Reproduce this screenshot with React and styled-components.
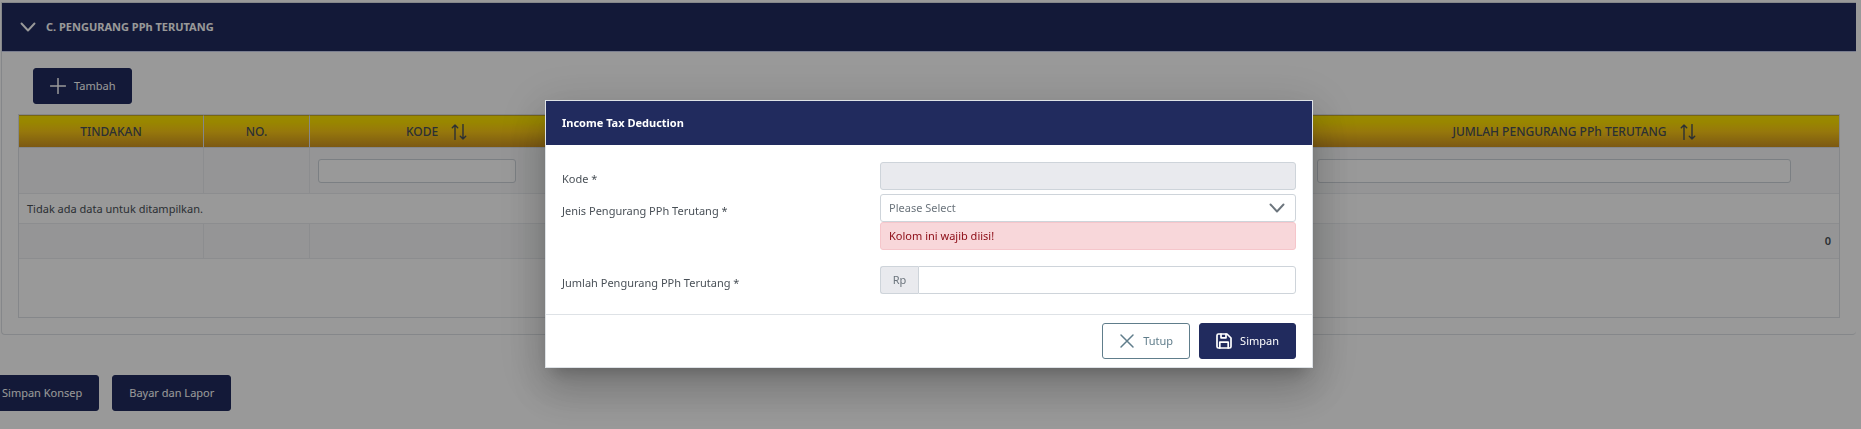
import React from "react";
import styled, { createGlobalStyle, css } from "styled-components";

const navy = "#212b5e";
const line = "#dee2e6";
const inputLine = "#ced4da";
const ink = "#495057";

const GlobalStyle = createGlobalStyle`
  *, *::before, *::after { box-sizing: border-box; }
  body {
    margin: 0;
    background: #fff;
    color: ${ink};
    font-family: "Noto Sans", "Open Sans", sans-serif;
    font-size: 11px;
    line-height: 18px;
  }
  button, input, select { font: inherit; color: inherit; margin: 0; }
`;

const Page = styled.main`
  min-height: 100vh;
  padding: 2px 5px 0 1px;
  overflow: hidden;
`;

const Card = styled.section`
  border: 1px solid ${line};
  border-right: 0;
  border-radius: 0 0 4px 4px;
`;

const CardHeader = styled.h2`
  margin: 0;
  border-bottom: 1px solid #ccd2ee;
  background: ${navy};
  font-size: 11px;
`;

const CollapseButton = styled.button`
  display: flex;
  align-items: center;
  gap: 10px;
  width: 100%;
  height: 48px;
  padding: 0 18px;
  border: 0;
  background: none;
  color: #fff;
  font-weight: 700;
  text-align: left;
`;

const CardBody = styled.div`
  padding: 16px;
`;

const Toolbar = styled.div`
  display: flex;
  padding: 0 15px 10px;
`;

const Button = styled.button`
  display: inline-flex;
  align-items: center;
  justify-content: center;
  gap: 8px;
  height: 36px;
  padding: 0 16px;
  border: 1px solid ${navy};
  border-radius: 3px;
  background: ${navy};
  color: #fff;
  ${(p) =>
    p.$outlined &&
    css`
      border-color: #607d8b;
      background: #fff;
      color: #607d8b;
    `}
`;

const TableWrap = styled.div`
  min-height: 204px;
  border: 1px solid ${line};
`;

const Table = styled.table`
  width: 100%;
  table-layout: fixed;
  border-collapse: separate;
  border-spacing: 0;
`;

const Col = styled.col`
  width: ${(p) => p.$width};
`;

const HeadCell = styled.th`
  height: 33px;
  padding: 0 8px;
  border-top: 1px solid #c8a820;
  border-right: 1px solid ${line};
  border-bottom: 1px solid ${line};
  background: linear-gradient(#ffe600 0%, #ffe000 20%, #fbc814 50%, #cf9420 100%);
  font-size: 12px;
  font-weight: 500;
  text-align: center;
  &:last-child { border-right: 0; }
`;

const HeadLabel = styled.span`
  display: inline-flex;
  align-items: center;
  gap: 13px;
`;

const Cell = styled.td`
  height: ${(p) => p.$height};
  padding: 0 8px;
  border-bottom: 1px solid #e9ecef;
  background: ${(p) => (p.$shaded ? "#f8f9fa" : "#fff")};
  border-right: ${(p) => (p.$divided ? "1px solid #e9ecef" : "0")};
  text-align: ${(p) => (p.$numeric ? "right" : "left")};
  font-weight: ${(p) => (p.$numeric ? 600 : 400)};
`;

const FilterBox = styled.div`
  display: flex;
  padding-right: 40px;
`;

const TextInput = styled.input`
  flex: 1;
  width: 100%;
  min-width: 0;
  height: ${(p) => p.$height || "28px"};
  padding: 0 8px;
  border: 1px solid ${inputLine};
  border-radius: ${(p) => (p.$joined ? "0 3px 3px 0" : "3px")};
  background: #fff;
  &:disabled { background: #e9eaee; }
`;

const PageActions = styled.div`
  display: flex;
  gap: 13px;
  margin: 40px 0 0 -16px;
`;

const Backdrop = styled.div`
  position: fixed;
  inset: 0;
  display: flex;
  justify-content: center;
  align-items: flex-start;
  padding: 100px 3px 0 0;
  background: rgba(0, 0, 0, 0.4);
`;

const Dialog = styled.section`
  width: 768px;
  max-width: 100%;
  border: 1px solid ${line};
  background: #fff;
  box-shadow: 0 11px 15px -7px rgba(0, 0, 0, 0.2), 0 24px 38px 3px rgba(0, 0, 0, 0.14),
    0 9px 46px 8px rgba(0, 0, 0, 0.12);
`;

const DialogTitle = styled.h1`
  margin: 0;
  padding: 13px 16px;
  background: ${navy};
  color: #fff;
  font-size: 11px;
  font-weight: 700;
`;

const DialogBody = styled.div`
  display: grid;
  gap: 4px;
  padding: 17px 16px 20px;
`;

const Field = styled.div`
  display: grid;
  grid-template-columns: 13fr 17fr;
  align-items: start;
  margin-top: ${(p) => (p.$spaced ? "12px" : "0")};
`;

const Label = styled.label`
  padding-top: 8px;
`;

const SelectBox = styled.div`
  position: relative;
  color: #6c757d;
`;

const Select = styled.select`
  display: block;
  width: 100%;
  height: 28px;
  padding: 0 32px 0 8px;
  border: 1px solid ${inputLine};
  border-radius: 3px;
  background: #fff;
  appearance: none;
`;

const SelectArrow = styled.span`
  position: absolute;
  top: 6px;
  right: 11px;
  display: flex;
  pointer-events: none;
`;

const ErrorMessage = styled.div`
  padding: 4px 8px;
  border: 1px solid #f5c6cb;
  border-radius: 3px;
  background: #f8d7da;
  color: #8b0a14;
`;

const InputGroup = styled.div`
  display: flex;
`;

const Prefix = styled.span`
  display: flex;
  align-items: center;
  justify-content: center;
  width: 38px;
  border: 1px solid ${inputLine};
  border-right: 0;
  border-radius: 3px 0 0 3px;
  background: #e9eaee;
  color: #6c757d;
`;

const DialogFooter = styled.footer`
  display: flex;
  justify-content: flex-end;
  gap: 9px;
  padding: 8px 16px;
  border-top: 1px solid ${line};
`;

const Icon = ({ width = 1, children }) => (
  <svg
    width="16"
    height="16"
    viewBox="0 0 16 16"
    fill="none"
    stroke="currentColor"
    strokeWidth={width}
    strokeLinecap="round"
    strokeLinejoin="round"
    aria-hidden="true"
  >
    {children}
  </svg>
);

const ChevronIcon = () => (
  <Icon width={1.9}>
    <path d="M1.500 4.500 8 11.500l6.500-7" />
  </Icon>
);

const PlusIcon = () => (
  <Icon width={1.5}>
    <path d="M8 .5v15M.5 8h15" />
  </Icon>
);

const CloseIcon = () => (
  <Icon width={1.5}>
    <path d="M2 2l12 12M14 2 2 14" />
  </Icon>
);

const SortIcon = () => (
  <Icon width={1.4}>
    <path d="M4 15.500V1M1.300 3.700 4 1l2.700 2.700M12 .5V15M9.300 12.300 12 15l2.700-2.700" />
  </Icon>
);

const SaveIcon = () => (
  <Icon width={1.7}>
    <path d="M2.400 1H11l4 4v8.600a1.400 1.400 0 0 1-1.400 1.400H2.400A1.400 1.400 0 0 1 1 13.600V2.400A1.400 1.400 0 0 1 2.400 1z" />
    <path d="M3.800 15V9.200h8.400V15M5 1v3.800h5V1" />
  </Icon>
);

export default function App() {
  return (
    <>
      <GlobalStyle />
      <Page>
        <Card>
          <CardHeader>
            <CollapseButton type="button" aria-expanded="true">
              <ChevronIcon />
              C. PENGURANG PPh TERUTANG
            </CollapseButton>
          </CardHeader>
          <CardBody>
            <Toolbar>
              <Button type="button">
                <PlusIcon />
                Tambah
              </Button>
            </Toolbar>
            <TableWrap>
              <Table>
                <colgroup>
                  <Col $width="185px" />
                  <Col $width="106px" />
                  <Col $width="254px" />
                  <Col />
                  <Col $width="530px" />
                </colgroup>
                <thead>
                  <tr>
                    <HeadCell>TINDAKAN</HeadCell>
                    <HeadCell>NO.</HeadCell>
                    <HeadCell>
                      <HeadLabel>
                        KODE <SortIcon />
                      </HeadLabel>
                    </HeadCell>
                    <HeadCell />
                    <HeadCell>
                      <HeadLabel>
                        JUMLAH PENGURANG PPh TERUTANG <SortIcon />
                      </HeadLabel>
                    </HeadCell>
                  </tr>
                </thead>
                <tbody>
                  <tr>
                    <Cell $height="46px" $shaded $divided />
                    <Cell $shaded $divided />
                    <Cell $shaded>
                      <FilterBox>
                        <TextInput $height="24px" aria-label="Kode" />
                      </FilterBox>
                    </Cell>
                    <Cell $shaded />
                    <Cell $shaded>
                      <FilterBox>
                        <TextInput $height="24px" aria-label="Jumlah" />
                      </FilterBox>
                    </Cell>
                  </tr>
                  <tr>
                    <Cell $height="30px" colSpan={5}>
                      Tidak ada data untuk ditampilkan.
                    </Cell>
                  </tr>
                </tbody>
                <tfoot>
                  <tr>
                    <Cell $height="35px" $shaded $divided />
                    <Cell $shaded $divided />
                    <Cell $shaded />
                    <Cell $shaded />
                    <Cell $shaded $numeric>
                      0
                    </Cell>
                  </tr>
                </tfoot>
              </Table>
            </TableWrap>
          </CardBody>
        </Card>
        <PageActions>
          <Button type="button">Simpan Konsep</Button>
          <Button type="button">Bayar dan Lapor</Button>
        </PageActions>
      </Page>
      <Backdrop>
        <Dialog role="dialog" aria-modal="true" aria-labelledby="dialog-title">
          <DialogTitle id="dialog-title">Income Tax Deduction</DialogTitle>
          <DialogBody>
            <Field>
              <Label htmlFor="kode">Kode *</Label>
              <TextInput id="kode" disabled />
            </Field>
            <Field>
              <Label htmlFor="jenis">Jenis Pengurang PPh Terutang *</Label>
              <div>
                <SelectBox>
                  <Select id="jenis" defaultValue="">
                    <option value="">Please Select</option>
                  </Select>
                  <SelectArrow>
                    <ChevronIcon />
                  </SelectArrow>
                </SelectBox>
                <ErrorMessage role="alert">Kolom ini wajib diisi!</ErrorMessage>
              </div>
            </Field>
            <Field $spaced>
              <Label htmlFor="jumlah">Jumlah Pengurang PPh Terutang *</Label>
              <InputGroup>
                <Prefix>Rp</Prefix>
                <TextInput id="jumlah" $joined />
              </InputGroup>
            </Field>
          </DialogBody>
          <DialogFooter>
            <Button type="button" $outlined>
              <CloseIcon />
              Tutup
            </Button>
            <Button type="button">
              <SaveIcon />
              Simpan
            </Button>
          </DialogFooter>
        </Dialog>
      </Backdrop>
    </>
  );
}
